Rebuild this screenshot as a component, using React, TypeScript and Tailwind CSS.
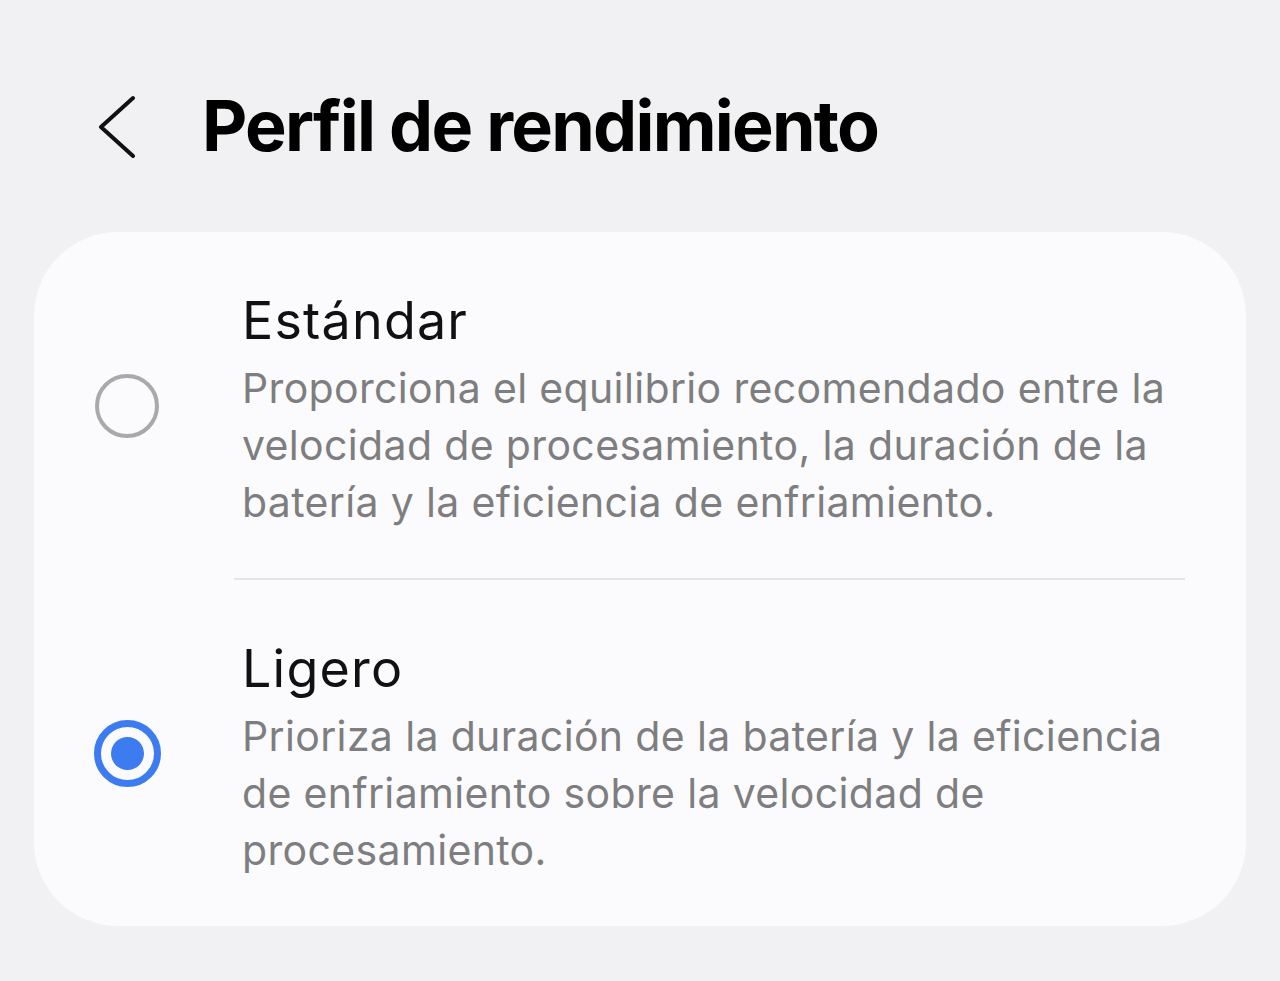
import React from "react";

const options = [
  {
    title: "Estándar",
    desc: "Proporciona el equilibrio recomendado entre la velocidad de procesamiento, la duración de la batería y la eficiencia de enfriamiento.",
    selected: false,
  },
  {
    title: "Ligero",
    desc: "Prioriza la duración de la batería y la eficiencia de enfriamiento sobre la velocidad de procesamiento.",
    selected: true,
  },
];

function Radio({ on }: { on: boolean }) {
  if (on) {
    return (
      <div className="w-[67px] h-[67px] rounded-full border-[7px] border-[#3d7cf0] flex items-center justify-center">
        <div className="w-[33px] h-[33px] rounded-full bg-[#3d7cf0]" />
      </div>
    );
  }
  return <div className="w-[64px] h-[64px] rounded-full border-[4px] border-[#a9a9ab]" />;
}

export default function App() {
  return (
    <div
      className="min-h-screen bg-[#f1f1f3] pt-[91px]"
      style={{ fontFamily: "Inter, 'Noto Sans', sans-serif" }}
    >
      {/* Header */}
      <div className="flex items-center pl-[98px]">
        <svg width="40" height="64" viewBox="0 0 40 64" fill="none">
          <polyline
            points="35,4 3,33 35,62"
            stroke="#111"
            strokeWidth="4"
            strokeLinecap="round"
            strokeLinejoin="round"
          />
        </svg>
        <h1 className="ml-[64px] text-[70px] leading-[70px] font-bold text-black tracking-[-1.75px]">
          Perfil de rendimiento
        </h1>
      </div>

      {/* Card */}
      <div className="mt-[71px] mx-[34px] bg-[#fbfbfd] rounded-[84px]">
        {options.map((opt, i) => (
          <div key={i} className="flex">
            <div
              className={`w-[200px] shrink-0 flex items-center ${
                opt.selected ? "pl-[60px]" : "pl-[61px]"
              }`}
            >
              <Radio on={opt.selected} />
            </div>
            <div
              className={`flex-1 mr-[61px] pl-[8px] pt-[58px] pb-[47px] ${
                i === 0 ? "border-b-2 border-[#e4e4e6]" : ""
              }`}
            >
              <div className="text-[52px] leading-[62px] text-[#111] tracking-[1.2px]">
                {opt.title}
              </div>
              <div className="mt-[8px] text-[41px] leading-[57px] text-[#7e7e80] tracking-[0.35px]">
                {opt.desc}
              </div>
            </div>
          </div>
        ))}
      </div>
    </div>
  );
}
